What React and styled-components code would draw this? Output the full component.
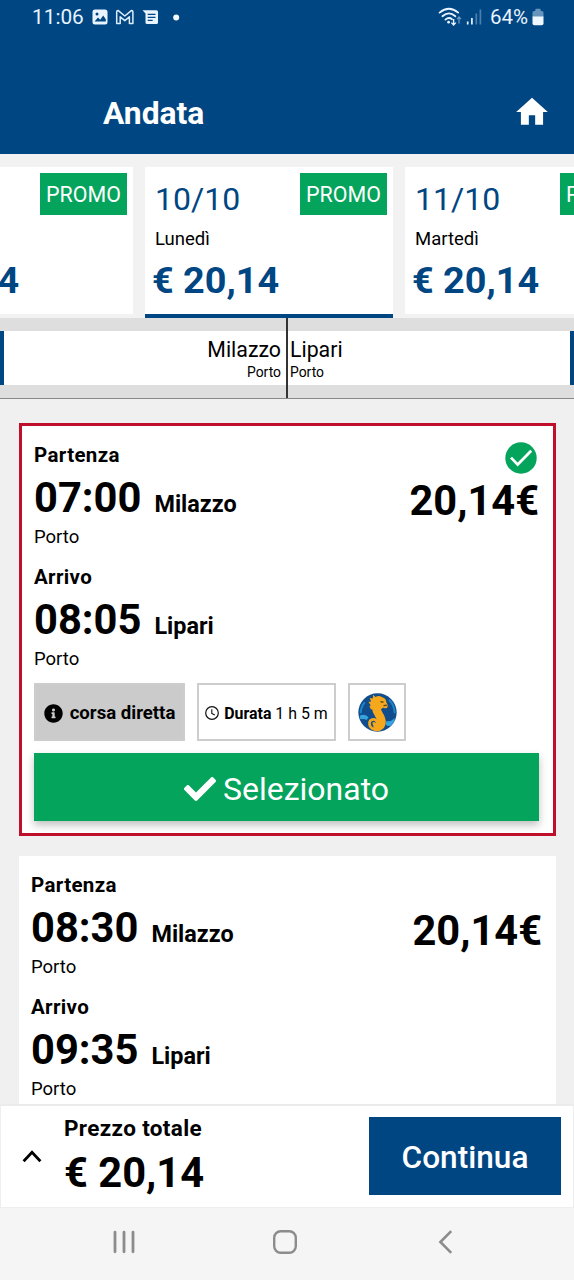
import React from 'react'
import styled, { createGlobalStyle } from 'styled-components'
import { FaCheck, FaInfoCircle } from 'react-icons/fa'
import { MdHome } from 'react-icons/md'

const dates = [
  { day: '09/10', name: 'Domenica', price: '€ 20,14' },
  { day: '10/10', name: 'Lunedì', price: '€ 20,14', active: true },
  { day: '11/10', name: 'Martedì', price: '€ 20,14' },
]

const trips = [
  { id: 1, from: 'Milazzo', to: 'Lipari', start: '07:00', end: '08:05', price: '20,14€', selected: true },
  { id: 2, from: 'Milazzo', to: 'Lipari', start: '08:30', end: '09:35', price: '20,14€' },
]

const StatusIcons = () => (
  <svg width="92" height="18" viewBox="0 0 92 18" fill="none">
    {/* gallery */}
    <rect x="0.5" y="1.5" width="15" height="15" rx="2.5" fill="#e8f4ff" />
    <path d="M2.6 13.4 6 9.4l2.2 2.4 3-4.2 2.6 3.6v2.2z" fill="#004683" />
    <circle cx="5" cy="6" r="1.5" fill="#004683" />
    {/* mail */}
    <path
      d="M24.7 15.5V4.2q0-1.8 1.6-1.6l6.5 5.4 6.5-5.4q1.6-.2 1.6 1.6v11.3h-3.5V8.8l-4.6 3.8-4.6-3.8v6.7z"
      stroke="#dcecfb"
      strokeWidth="1.5"
      strokeLinejoin="round"
    />
    {/* messages */}
    <path d="M50.5 2.2h14q1.5 0 1.5 1.5v10.8q0 1.5-1.5 1.5H55q-1.5 0-1.5-1.5V5.6z" fill="#e8f4ff" />
    <path d="M55.7 6.3h7.8M55.7 9.3h7.8M55.7 12.3h5" stroke="#004683" strokeWidth="1.3" />
    <circle cx="84.2" cy="9.5" r="3" fill="#f4faff" />
  </svg>
)

const SignalIcons = () => (
  <svg width="46" height="20" viewBox="0 0 46 20" fill="none">
    <g stroke="#e8f4ff" strokeWidth="1.8" strokeLinecap="round">
      <path d="M1.6 5.6q9.2-7.8 18.6 0" />
      <path d="M4.4 9.2q6.5-5.6 13 0" />
      <path d="M7.4 12.6q3.5-3 6.6-.4" />
    </g>
    <circle cx="10.6" cy="15.2" r="1.4" fill="#e8f4ff" />
    <path d="M15.6 12v5.6M13.4 15.6l2.2 2.4 2.2-2.4" stroke="#e8f4ff" strokeWidth="1.4" />
    <path d="M21 16.4v-6M19 12.2l2-2.2 2 2.2" stroke="#6f9cc4" strokeWidth="1.2" />
    <path d="M29.7 14.4v3.2M33.9 11v6.6" stroke="#e8f4ff" strokeWidth="1.7" />
    <path d="M38.3 6.4v11.2M42.4 2.4v15.2" stroke="#4c7fae" strokeWidth="1.7" />
  </svg>
)

const Battery = () => (
  <svg width="12" height="18" viewBox="0 0 12 18">
    <path d="M3.3 3V1.6q0-.9.9-.9h3.6q.9 0 .9.9V3h1.2q1.6 0 1.6 1.6V9H.5V4.6Q.5 3 2.1 3z" fill="#6694bd" />
    <path d="M.5 8.6h11v6.8q0 1.8-1.8 1.8H2.3q-1.8 0-1.8-1.8z" fill="#eef7ff" />
  </svg>
)

const Clock = () => (
  <svg width="14" height="14" viewBox="0 0 14 14" fill="none" stroke="#111">
    <circle cx="7" cy="7" r="6.3" strokeWidth="1.2" />
    <path d="M6.8 3.2v4.2l3 1.7" strokeWidth="1.1" />
  </svg>
)

const Seahorse = () => (
  <svg width="39" height="39" viewBox="0 0 116 116">
    <circle cx="58" cy="58" r="57" fill="#114c8c" />
    <path d="M20 28q-12 14-12 32M92 20q16 14 17 40" fill="none" stroke="#1b86c8" strokeWidth="6" />
    <path d="M5 68q14-8 26 4l-5 8Q18 76 7 78zM84 84q14 2 26-10-4 18-14 24-8 2-14-4z" fill="#35a3dd" />
    <g fill="none" stroke="#f6a81c" strokeLinecap="round">
      <path d="M55 34C48 58 70 64 70 86q0 12-12 15" strokeWidth="25" />
      <path d="M64 108C48 113 34 103 34 90c1-15 22-15 22-2 0 8-9 8-9 2" strokeWidth="8" />
    </g>
    <path
      d="M38 48l-4-9 4-2-7-11 8 0-4-11 9 1 1-11 7 7q10-6 20 1 12 4 12 14 5 8 4 14-2 6-8 4-7-4-13 6z"
      fill="#f6a81c"
    />
    <path d="M67 26l9 1M76 38l10-2" stroke="#5b4a1c" strokeWidth="4" />
  </svg>
)

const Leg = ({ label, time, city }) => (
  <LegBlock>
    <LegLabel>{label}</LegLabel>
    <LegTime>
      <span>{time}</span>
      <City>{city}</City>
    </LegTime>
    <Harbour>Porto</Harbour>
  </LegBlock>
)

const TripActions = () => (
  <>
    <Tags>
      <Tag $filled>
        <FaInfoCircle size={19} />
        <b>corsa diretta</b>
      </Tag>
      <Tag $small>
        <Clock />
        <span>
          <b>Durata</b> 1 h 5 m
        </span>
      </Tag>
      <Tag $logo>
        <Seahorse />
      </Tag>
    </Tags>
    <SelectButton>
      <FaCheck size={32} />
      Selezionato
    </SelectButton>
  </>
)

const Trip = ({ trip }) => (
  <TripCard $selected={trip.selected}>
    <TripTop>
      <div>
        <Leg label="Partenza" time={trip.start} city={trip.from} />
        <Leg label="Arrivo" time={trip.end} city={trip.to} />
      </div>
      <PriceColumn>
        <CheckSlot>
          {trip.selected && (
            <svg width="32" height="32" viewBox="0 0 32 32">
              <circle cx="16" cy="16" r="15.7" fill="#04a45c" />
              <path d="M6 15.6l6.7 7L26.2 8.8" fill="none" stroke="#fff" strokeWidth="2.8" />
            </svg>
          )}
        </CheckSlot>
        <Price>{trip.price}</Price>
      </PriceColumn>
    </TripTop>
    {trip.selected && <TripActions />}
  </TripCard>
)

const App = () => {
  return (
    <Screen>
      <GlobalStyle />
      <Header>
        <StatusBar>
          <StatusTime>11:06</StatusTime>
          <StatusIcons />
          <StatusRight>
            <SignalIcons />
            <Percent>64%</Percent>
            <Battery />
          </StatusRight>
        </StatusBar>
        <TitleBar>
          <Title>Andata</Title>
          <MdHome size={38} />
        </TitleBar>
      </Header>
      <DateStrip>
        {dates.map((d) => (
          <DateCard key={d.day} $active={d.active}>
            <DateTop>
              <Day>{d.day}</Day>
              <Promo>PROMO</Promo>
            </DateTop>
            <DayName>{d.name}</DayName>
            <DayPrice>{d.price}</DayPrice>
          </DateCard>
        ))}
      </DateStrip>
      <RouteBar>
        <RouteEnd $from>
          <RoutePlace $from>
            <strong>Milazzo</strong>
            <small>Porto</small>
          </RoutePlace>
        </RouteEnd>
        <RouteEnd>
          <RoutePlace>
            <strong>Lipari</strong>
            <small>Porto</small>
          </RoutePlace>
        </RouteEnd>
      </RouteBar>
      <TripList>
        {trips.map((t) => (
          <Trip key={t.id} trip={t} />
        ))}
      </TripList>
      <Footer>
        <svg width="20" height="14" viewBox="0 0 20 14" fill="none">
          <path d="M1.6 12.2 10 3.4l8.4 8.8" stroke="#000" strokeWidth="2.8" />
        </svg>
        <Total>
          <TotalLabel>Prezzo totale</TotalLabel>
          <TotalPrice>€ 20,14</TotalPrice>
        </Total>
        <Continue>Continua</Continue>
      </Footer>
      <NavBar>
        <svg width="24" height="24" viewBox="0 0 24 24" stroke="#8c8c8c" strokeWidth="2.8" strokeLinecap="round">
          <path d="M3 2.2v19.6M12 2.2v19.6M21 2.2v19.6" />
        </svg>
        <svg width="24" height="24" viewBox="0 0 24 24" fill="none" stroke="#8c8c8c" strokeWidth="2.4">
          <rect x="1.2" y="1.2" width="21.6" height="21.6" rx="6.5" />
        </svg>
        <svg width="24" height="24" viewBox="0 0 24 24" fill="none" stroke="#8c8c8c" strokeWidth="2.6">
          <path d="M18.2 1.2 7.4 12l10.8 10.8" />
        </svg>
      </NavBar>
    </Screen>
  )
}

const GlobalStyle = createGlobalStyle`
  * {
    box-sizing: border-box;
  }
  body {
    margin: 0;
    font-family: Roboto, sans-serif;
    color: #000;
  }
  svg {
    flex-shrink: 0;
    display: block;
  }
`

const Screen = styled.div`
  width: 574px;
  height: 1280px;
  display: flex;
  flex-direction: column;
  overflow: hidden;
  background: #f0f0f0;
`

const Header = styled.header`
  height: 154px;
  flex-shrink: 0;
  background: #004683;
  color: #fff;
`

const StatusBar = styled.div`
  height: 35px;
  padding: 0 30px 1px 32px;
  display: flex;
  align-items: center;
`

const StatusTime = styled.span`
  width: 60px;
  font-size: 20.8px;
  color: #e8f4ff;
`

const StatusRight = styled.div`
  display: flex;
  align-items: center;
  margin-left: auto;
`

const Percent = styled.span`
  margin: 0 4px 0 6px;
  font-size: 20.5px;
  color: #e8f4ff;
`

const TitleBar = styled.div`
  padding: 58px 23px 0 103px;
  display: flex;
  align-items: center;
  justify-content: space-between;
`

const Title = styled.h1`
  margin: 0;
  padding-top: 3px;
  font-size: 31.8px;
  line-height: 35px;
  font-weight: 700;
`

const DateStrip = styled.div`
  height: 164px;
  flex-shrink: 0;
  display: flex;
  gap: 12px;
  padding-top: 13px;
  margin-left: -115px;
  background: #f2f2f2;
`

const DateCard = styled.div`
  width: 248px;
  height: ${(p) => (p.$active ? 151 : 147)}px;
  flex-shrink: 0;
  padding: 6px 6px 0 10px;
  background: #fff;
  border-bottom: ${(p) => (p.$active ? '4px solid #004683' : 'none')};
`

const DateTop = styled.div`
  display: flex;
  justify-content: space-between;
  height: 53px;
`

const Day = styled.span`
  font-size: 32px;
  line-height: 53px;
  color: #004683;
`

const Promo = styled.span`
  width: 87px;
  height: 42px;
  background: #04a45c;
  color: #fff;
  font-size: 21.4px;
  line-height: 44px;
  text-align: center;
`

const DayName = styled.div`
  font-size: 18.5px;
  line-height: 27px;
`

const DayPrice = styled.div`
  margin-left: -3px;
  font-size: 37.8px;
  line-height: 55px;
  font-weight: 700;
  color: #004683;
`

const RouteBar = styled.div`
  height: 81px;
  flex-shrink: 0;
  display: grid;
  grid-template-columns: 288px 1fr;
  background: #dedede;
  border-bottom: 1px solid #888;
`

const RouteEnd = styled.div`
  padding: 13px 0;
  border-right: ${(p) => (p.$from ? '2px solid #333' : 'none')};
`

const RoutePlace = styled.div`
  height: 54px;
  padding: 6px 5px 0 2px;
  display: flex;
  flex-direction: column;
  align-items: ${(p) => (p.$from ? 'flex-end' : 'flex-start')};
  background: #fff;
  border: 0 solid #004683;
  border-width: ${(p) => (p.$from ? '0 0 0 4px' : '0 4px 0 0')};

  strong {
    font-size: 21.3px;
    line-height: 25px;
    font-weight: 400;
  }

  small {
    font-size: 13.9px;
    line-height: 21px;
  }
`

const TripList = styled.main`
  height: 705px;
  flex-shrink: 0;
  padding: 24px 18.5px 0 19px;
  overflow: hidden;
`

const TripCard = styled.article`
  margin-bottom: 20px;
  padding: 12.5px 13.5px 12px 12px;
  background: #fff;
  border: ${(p) => (p.$selected ? '3px solid #c00f2b' : 'none')};
`

const TripTop = styled.div`
  display: flex;
  justify-content: space-between;
`

const LegBlock = styled.div`
  margin-bottom: 11.5px;
`

const LegLabel = styled.div`
  padding-top: 1px;
  font-size: 20.5px;
  line-height: 30px;
  font-weight: 700;
  letter-spacing: 0.35px;
`

const LegTime = styled.div`
  display: flex;
  align-items: baseline;
  height: 56px;
  font-size: 41.7px;
  line-height: 56px;
  font-weight: 700;
`

const City = styled.span`
  margin-left: 13px;
  font-size: 23.4px;
  line-height: 30px;
`

const Harbour = styled.div`
  font-size: 18.5px;
  line-height: 23.75px;
`

const PriceColumn = styled.div`
  display: flex;
  flex-direction: column;
  align-items: flex-end;
`

const CheckSlot = styled.div`
  height: 38px;
  padding: 3px 2px 0 0;
`

const Price = styled.div`
  font-size: 41.6px;
  line-height: 48px;
  font-weight: 700;
`

const Tags = styled.div`
  display: flex;
  gap: 12px;
`

const Tag = styled.div`
  width: ${(p) => (p.$filled ? 151 : p.$logo ? 58 : 139)}px;
  height: 58px;
  display: flex;
  align-items: center;
  justify-content: center;
  gap: ${(p) => (p.$small ? 5 : 7)}px;
  padding-top: ${(p) => (p.$logo ? 0 : 2)}px;
  font-size: ${(p) => (p.$small ? 15.9 : 18.6)}px;
  white-space: nowrap;
  background: ${(p) => (p.$filled ? '#cbcbcb' : '#fff')};
  border: 2px solid #cdcdcd;
`

const SelectButton = styled.div`
  height: 68px;
  margin-top: 12px;
  display: flex;
  align-items: center;
  justify-content: center;
  gap: 7px;
  padding-top: 4px;
  background: #04a45c;
  color: #fff;
  font-size: 32px;
  box-shadow: 0 4px 8px rgba(0, 0, 0, 0.25);
`

const Footer = styled.footer`
  height: 104px;
  flex-shrink: 0;
  display: flex;
  align-items: center;
  padding: 0 12px 2px 21px;
  background: #fff;
  border: 1px solid #eee;
  border-top: 2px solid #ebebeb;
`

const Total = styled.div`
  margin-left: 22px;
  white-space: nowrap;
`

const TotalLabel = styled.div`
  font-size: 22.5px;
  line-height: 35px;
  font-weight: 700;
  letter-spacing: 0.35px;
`

const TotalPrice = styled.div`
  font-size: 41.7px;
  line-height: 54px;
  font-weight: 700;
`

const Continue = styled.div`
  width: 192px;
  height: 78px;
  margin-left: auto;
  background: #004683;
  color: #fff;
  font-size: 31.6px;
  line-height: 82px;
  font-weight: 500;
  text-align: center;
`

const NavBar = styled.nav`
  height: 72px;
  flex-shrink: 0;
  display: flex;
  align-items: center;
  gap: 136.5px;
  padding: 0 0 4px 112px;
  background: #f5f5f5;
`

export default App
